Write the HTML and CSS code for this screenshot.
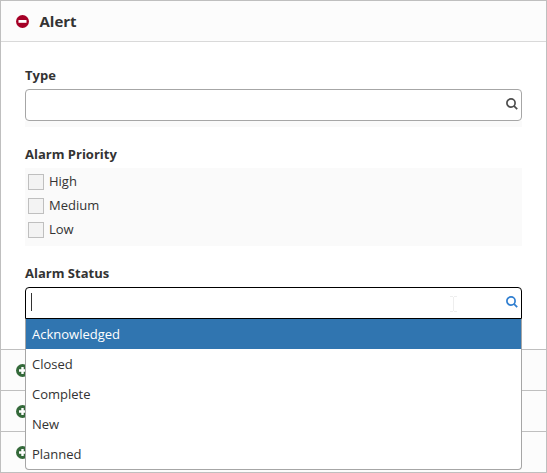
FILE: index.html
```
<!DOCTYPE html>
<html lang="en">
<head>
<meta charset="utf-8">
<title>Alert</title>
<link rel="stylesheet" href="styles.css">
</head>
<body>
<main class="panel">
  <header class="bar bar-open">
    <svg class="toggle" viewBox="0 0 13 13"><circle cx="6.5" cy="6.5" r="6.5" fill="#a50026"/><rect x="2.5" y="5" width="8" height="2.8" fill="#fff"/></svg>
    <h1>Alert</h1>
  </header>
  <section class="content">
    <div class="field">
      <label class="label">Type</label>
      <div class="input">
        <svg class="search" viewBox="0 0 12 12"><circle cx="5" cy="5" r="4.1"/><path d="M7.9 7.9L11.2 11.2"/></svg>
      </div>
      <div class="strip"></div>
    </div>
    <div class="field priority">
      <div class="label">Alarm Priority</div>
      <div class="checks">
        <label class="check"><span class="box"></span><span class="name">High</span></label>
        <label class="check"><span class="box"></span><span class="name">Medium</span></label>
        <label class="check"><span class="box"></span><span class="name">Low</span></label>
      </div>
    </div>
    <div class="field status">
      <label class="label">Alarm Status</label>
      <div class="input active">
        <span class="caret"></span>
        <svg class="pointer" viewBox="0 0 7 16"><path d="M0 .5H3M4 .5H7M3.5 1V15M0 15.5H3M4 15.5H7"/></svg>
        <svg class="search" viewBox="0 0 12 12"><circle cx="5" cy="5" r="4.1"/><path d="M7.9 7.9L11.2 11.2"/></svg>
        <ul class="menu">
          <li class="selected">Acknowledged</li>
          <li>Closed</li>
          <li>Complete</li>
          <li>New</li>
          <li>Planned</li>
        </ul>
      </div>
    </div>
  </section>
  <div class="bar"><svg class="toggle" viewBox="0 0 13 13"><circle cx="6.5" cy="6.5" r="6.5" fill="#34693a"/><path d="M6.5 3V10M3 6.5H10" stroke="#fff" stroke-width="2.4"/></svg></div>
  <div class="bar"><svg class="toggle" viewBox="0 0 13 13"><circle cx="6.5" cy="6.5" r="6.5" fill="#34693a"/><path d="M6.5 3V10M3 6.5H10" stroke="#fff" stroke-width="2.4"/></svg></div>
  <div class="bar"><svg class="toggle" viewBox="0 0 13 13"><circle cx="6.5" cy="6.5" r="6.5" fill="#34693a"/><path d="M6.5 3V10M3 6.5H10" stroke="#fff" stroke-width="2.4"/></svg></div>
</main>
</body>
</html>
```
FILE: styles.css
```
* { box-sizing: border-box; }
body {
  margin: 0;
  background: #fff;
  color: #333;
  font: 13px/18px "Open Sans", "Noto Sans", sans-serif;
}
.panel {
  width: 547px;
  height: 473px;
  border: 1px solid #bfbfbf;
  overflow: hidden;
}
.bar {
  display: flex;
  align-items: center;
  height: 41px;
  padding: 1px 0 0 15px;
  gap: 10.5px;
  background: #fcfcfc;
  border-top: 1px solid #bfbfbf;
}
.bar-open {
  border-top: 0;
  border-bottom: 1px solid #d9d9d9;
}
.toggle { width: 13px; height: 13px; }
h1 {
  margin: 0 0 1px;
  font-size: 15px;
  line-height: 20px;
  font-weight: 700;
}
.content {
  height: 307px;
  padding: 24px 24px 0;
}
.label {
  display: block;
  height: 23px;
  font-weight: 700;
}
.input {
  display: flex;
  align-items: center;
  position: relative;
  height: 32px;
  width: 497px;
  padding: 0 3px 0 5px;
  border: 1px solid #a6a6a6;
  border-radius: 4px;
  background: #fff;
}
.search {
  width: 12px;
  height: 12px;
  margin: 0 0 2px auto;
  fill: none;
  stroke: #4d4d4d;
  stroke-width: 1.7;
}
.strip { height: 6px; background: #fafafa; }
.priority { margin-top: 18px; }
.checks {
  height: 78px;
  padding: 2px 3px;
  background: #fafafa;
}
.check {
  display: flex;
  align-items: center;
  height: 24px;
  gap: 5px;
}
.name { margin-bottom: 2px; }
.box {
  width: 16px;
  height: 16px;
  border: 1px solid #bfbfbf;
  background: #f3f3f3;
}
.status { margin-top: 18px; }
.active {
  border-color: #000;
  border-radius: 4px 4px 0 0;
}
.active .search { margin-left: 49px; stroke: #2f7ed0; }
.caret { width: 1px; height: 18px; margin-bottom: 2px; background: #333; }
.pointer {
  width: 7px;
  height: 16px;
  margin-top: 2px;
  margin-left: auto;
  stroke: #eee;
  fill: none;
}
.menu {
  position: absolute;
  top: 31px;
  left: -1px;
  width: 497px;
  height: 151px;
  margin: 0;
  padding: 0;
  list-style: none;
  background: #fff;
  border: 1px solid #a6a6a6;
  border-top: 0;
  border-radius: 0 0 4px 4px;
}
.menu li { height: 30px; padding: 0 6px; line-height: 31px; }
.menu .selected { background: #3075b0; color: #fff; }
```
